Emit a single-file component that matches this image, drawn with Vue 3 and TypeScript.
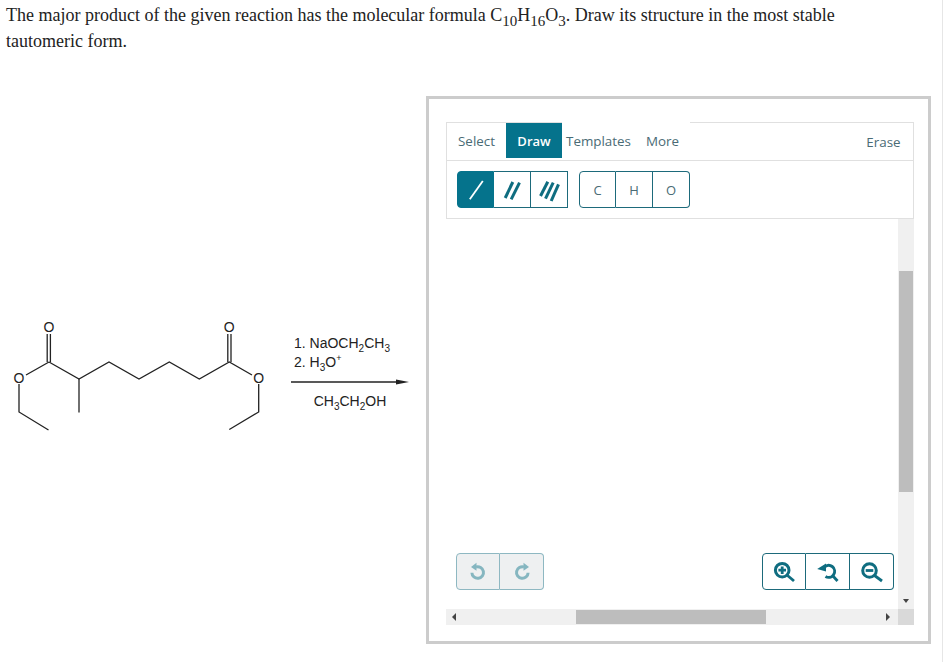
<template>
  <div class="page">
    <p class="question">
      The major product of the given reaction has the molecular formula
      C<sub>10</sub>H<sub>16</sub>O<sub>3</sub>. Draw its structure in the most stable tautomeric form.
    </p>
    <div class="content">
      <div class="reaction">
        <svg class="molecule" width="270" height="122" viewBox="0 0 270 122">
          <g fill="none" stroke="#222" stroke-width="1.3">
            <path d="M47.2 24V52M50.4 24V52" />
            <path d="M49 52L26 65M19 74V102L48.5 120" />
            <path d="M49 52L79 69L109 52L139 69L169.3 52L199.3 69L229.3 52L252 65" />
            <path d="M79 69V102.5" />
            <path d="M227.8 24V52M231 24V52" />
            <path d="M258.7 74V102L229.3 119.5" />
          </g>
          <g class="atom">
            <text x="49" y="22">O</text>
            <text x="19" y="73">O</text>
            <text x="229.3" y="22">O</text>
            <text x="258.7" y="73">O</text>
          </g>
        </svg>
        <div class="conditions">
          <div class="reagents">
            <div>1. NaOCH<sub>2</sub>CH<sub>3</sub></div>
            <div>2. H<sub>3</sub>O<sup>+</sup></div>
          </div>
          <svg class="arrow" width="118" height="6" viewBox="0 0 118 6">
            <path d="M0 3H106" stroke="#222" stroke-width="1.3" />
            <path d="M105 0.5L118 3L105 5.5Z" fill="#222" />
          </svg>
          <div class="solvent">CH<sub>3</sub>CH<sub>2</sub>OH</div>
        </div>
      </div>

      <div class="frame">
        <div class="sketcher">
          <div class="tabs">
            <div class="tab-list">
              <button v-for="tab in tabs" :key="tab" type="button" class="tab" :class="{ 'is-active': tab === 'Draw' }">
                {{ tab }}
              </button>
            </div>
            <button type="button" class="tab erase">Erase</button>
          </div>
          <div class="tools">
            <div class="btn-group">
              <button v-for="n in 3" :key="n" type="button" class="tool" :class="{ 'is-active': n === 1 }">
                <svg class="bond-icon" width="22" height="22" viewBox="0 0 22 22">
                  <path
                    v-for="line in bondLines[n - 1]"
                    :key="line"
                    :d="line"
                    fill="none"
                    :stroke="n === 1 ? '#fff' : '#0f6d80'"
                    :stroke-width="n === 1 ? 1.8 : 3"
                  />
                </svg>
              </button>
            </div>
            <div class="btn-group rounded">
              <button v-for="atom in atoms" :key="atom" type="button" class="tool atom-btn">{{ atom }}</button>
            </div>
          </div>
        </div>

        <div class="canvas">
          <div class="canvas-main">
            <div class="canvas-area">
              <div class="btn-group rounded history">
                <button type="button" class="tool icon-btn">
                  <svg width="20" height="20" viewBox="0 0 20 20">
                    <path d="M8 5A5.8 5.8 0 1 1 3.9 10.7" fill="none" stroke="#85b6c0" stroke-width="3" />
                    <path d="M8.5 0.8V8.8L3 5Z" fill="#85b6c0" />
                  </svg>
                </button>
                <button type="button" class="tool icon-btn">
                  <svg width="20" height="20" viewBox="0 0 20 20">
                    <path d="M12 5A5.8 5.8 0 1 0 16.1 10.7" fill="none" stroke="#85b6c0" stroke-width="3" />
                    <path d="M11.5 0.8V8.8L17 5Z" fill="#85b6c0" />
                  </svg>
                </button>
              </div>
              <div class="btn-group rounded zoom">
                <button type="button" class="tool zoom-btn">
                  <svg width="24" height="24" viewBox="0 0 24 24">
                    <circle cx="10.2" cy="10.2" r="6.8" fill="none" stroke="#0f6d80" stroke-width="3" />
                    <path d="M6.4 10.2H14M10.2 6.4V14" stroke="#0f6d80" stroke-width="2.8" />
                    <path d="M15.2 15.2L22 21" stroke="#0f6d80" stroke-width="2.8" />
                  </svg>
                </button>
                <button type="button" class="tool zoom-btn">
                  <svg width="24" height="24" viewBox="0 0 24 24">
                    <path d="M8 7.5A6 6 0 1 1 9.5 16.5" fill="none" stroke="#0f6d80" stroke-width="3" />
                    <path d="M1.2 9L10 3.5V11.5Z" fill="#0f6d80" />
                    <path d="M16.5 15.5L21.5 21" stroke="#0f6d80" stroke-width="2.8" />
                  </svg>
                </button>
                <button type="button" class="tool zoom-btn">
                  <svg width="24" height="24" viewBox="0 0 24 24">
                    <circle cx="9.5" cy="10.5" r="6.8" fill="none" stroke="#0f6d80" stroke-width="3" />
                    <path d="M5.7 10.5H13.3" stroke="#0f6d80" stroke-width="2.8" />
                    <path d="M14.5 15.5L22 21" stroke="#0f6d80" stroke-width="2.8" />
                  </svg>
                </button>
              </div>
            </div>
            <div class="vscroll">
              <div class="vthumb"></div>
              <span class="arrow-down"></span>
            </div>
          </div>
          <div class="hscroll">
            <span class="arrow-left"></span>
            <div class="hthumb"></div>
            <span class="arrow-right"></span>
          </div>
        </div>
      </div>
    </div>
  </div>
</template>

<script setup lang="ts">
const tabs = ['Select', 'Draw', 'Templates', 'More']
const atoms = ['C', 'H', 'O']

const bondLines: string[][] = [
  ['M4.8 20.3L17.8 2'],
  ['M4.2 19L11.8 3', 'M10.2 20.3L18.5 3.7'],
  ['M2.5 17L9.8 2.7', 'M7.5 19.7L15.2 3.7', 'M13.2 22L20.5 5.3'],
]
</script>

<style scoped>
.page {
  width: 943px;
  height: 662px;
  box-sizing: border-box;
  overflow: hidden;
  background: #fff;
  border-right: 1px solid #e6e6e6;
  font-family: "Liberation Sans", Arial, sans-serif;
}

.question {
  margin: 0;
  padding: 2px 90px 0 6px;
  font-family: "Liberation Serif", "Times New Roman", serif;
  font-size: 18px;
  line-height: 26px;
  color: #222;
}

.question sub {
  font-size: 15px;
  line-height: 0;
}

.content {
  display: flex;
  margin-top: 42px;
}

.reaction {
  width: 426px;
  display: flex;
  align-items: flex-start;
  flex-shrink: 0;
  padding-top: 209px;
}

.molecule {
  display: block;
  margin-top: 5px;
  flex-shrink: 0;
}

.atom text {
  font-size: 14px;
  text-anchor: middle;
  fill: #222;
}

.conditions {
  width: 118px;
  margin-left: 21px;
  font-size: 14px;
  color: #222;
}

.reagents {
  line-height: 19px;
  padding-left: 3px;
  margin-top: 29px;
}

.reagents sub,
.solvent sub {
  font-size: 10px;
  line-height: 0;
}

.reagents sup {
  font-size: 9px;
  line-height: 0;
}

.arrow {
  display: block;
  margin-top: 7px;
}

.solvent {
  margin-top: 7px;
  text-align: center;
  line-height: 19px;
}

.frame {
  width: 505px;
  height: 548px;
  box-sizing: border-box;
  border: 3px solid #ccc;
  padding: 23px 14px 16px 17px;
  display: flex;
  flex-direction: column;
}

.sketcher {
  border: 1px solid #e0e0e0;
}

.tabs {
  display: flex;
  justify-content: space-between;
  height: 37px;
  border-bottom: 1px solid #e0e0e0;
}

.tab-list {
  display: flex;
}

.tab {
  border: none;
  background: transparent;
  font-family: "Open Sans", "Liberation Sans", sans-serif;
  font-size: 13.4px;
  color: #4a6b75;
  padding: 0;
  height: 35px;
}

.tab:nth-child(1) {
  width: 59px;
}

.tab:nth-child(2) {
  width: 56px;
}

/* these two sit over the top rule, which is why it breaks above them */
.tab:nth-child(3) {
  width: 73px;
  height: 36px;
  margin-top: -1px;
  padding-top: 1px;
  background: #fff;
}

.tab:nth-child(4) {
  width: 55px;
  height: 36px;
  margin-top: -1px;
  padding-top: 1px;
  background: #fff;
}

.tab.is-active {
  background: #05738c;
  color: #fff;
  font-size: 13px;
  font-weight: 600;
}

.tab.erase {
  width: 59px;
  height: 35px;
  margin-top: 1px;
  padding-top: 0;
  background: transparent;
}

.tools {
  display: flex;
  gap: 11px;
  height: 57px;
  padding: 10px 0 0 10px;
  box-sizing: border-box;
}

.btn-group {
  display: flex;
  height: 37px;
}

.tool {
  width: 37px;
  height: 37px;
  box-sizing: border-box;
  padding: 0;
  border: 1px solid #1d6a7b;
  border-left-width: 0;
  background: #fff;
  display: flex;
  align-items: center;
  justify-content: center;
  font-family: "Open Sans", "Liberation Sans", sans-serif;
  font-size: 13px;
  color: #4a6b75;
}

.tool:first-child {
  border-left-width: 1px;
  border-radius: 4px 0 0 4px;
}

.rounded .tool:last-child {
  border-radius: 0 4px 4px 0;
}

.tool.is-active {
  background: #05738c;
  border-color: #05738c;
}

.bond-icon {
  overflow: visible;
}

.canvas {
  flex: 1;
  display: flex;
  flex-direction: column;
}

.canvas-main {
  flex: 1;
  display: flex;
}

.canvas-area {
  flex: 1;
  position: relative;
}

.vscroll {
  width: 16px;
  background: #f0f0f0;
  position: relative;
}

.vthumb {
  position: absolute;
  top: 52px;
  left: 1px;
  width: 14px;
  height: 221px;
  background: #bdbdbd;
}

.arrow-down {
  position: absolute;
  bottom: 6px;
  left: 5px;
  border-left: 3px solid transparent;
  border-right: 3px solid transparent;
  border-top: 4px solid #444;
}

.hscroll {
  height: 16px;
  background: #f0f0f0;
  position: relative;
  box-shadow: inset -16px 0 0 #d9d9d9;
}

.hthumb {
  position: absolute;
  top: 1px;
  left: 130px;
  width: 190px;
  height: 14px;
  background: #bdbdbd;
}

.arrow-left {
  position: absolute;
  top: 4px;
  left: 6px;
  border-top: 4px solid transparent;
  border-bottom: 4px solid transparent;
  border-right: 4px solid #444;
}

.arrow-right {
  position: absolute;
  top: 4px;
  right: 24px;
  border-top: 4px solid transparent;
  border-bottom: 4px solid transparent;
  border-left: 4px solid #444;
}

.history {
  position: absolute;
  left: 10px;
  bottom: 19px;
}

.icon-btn {
  width: 44px;
  background: #eef0f1;
  border-color: #8eb8c2;
}

.zoom {
  position: absolute;
  right: 4px;
  bottom: 19px;
}

.zoom-btn {
  width: 44px;
}
</style>
